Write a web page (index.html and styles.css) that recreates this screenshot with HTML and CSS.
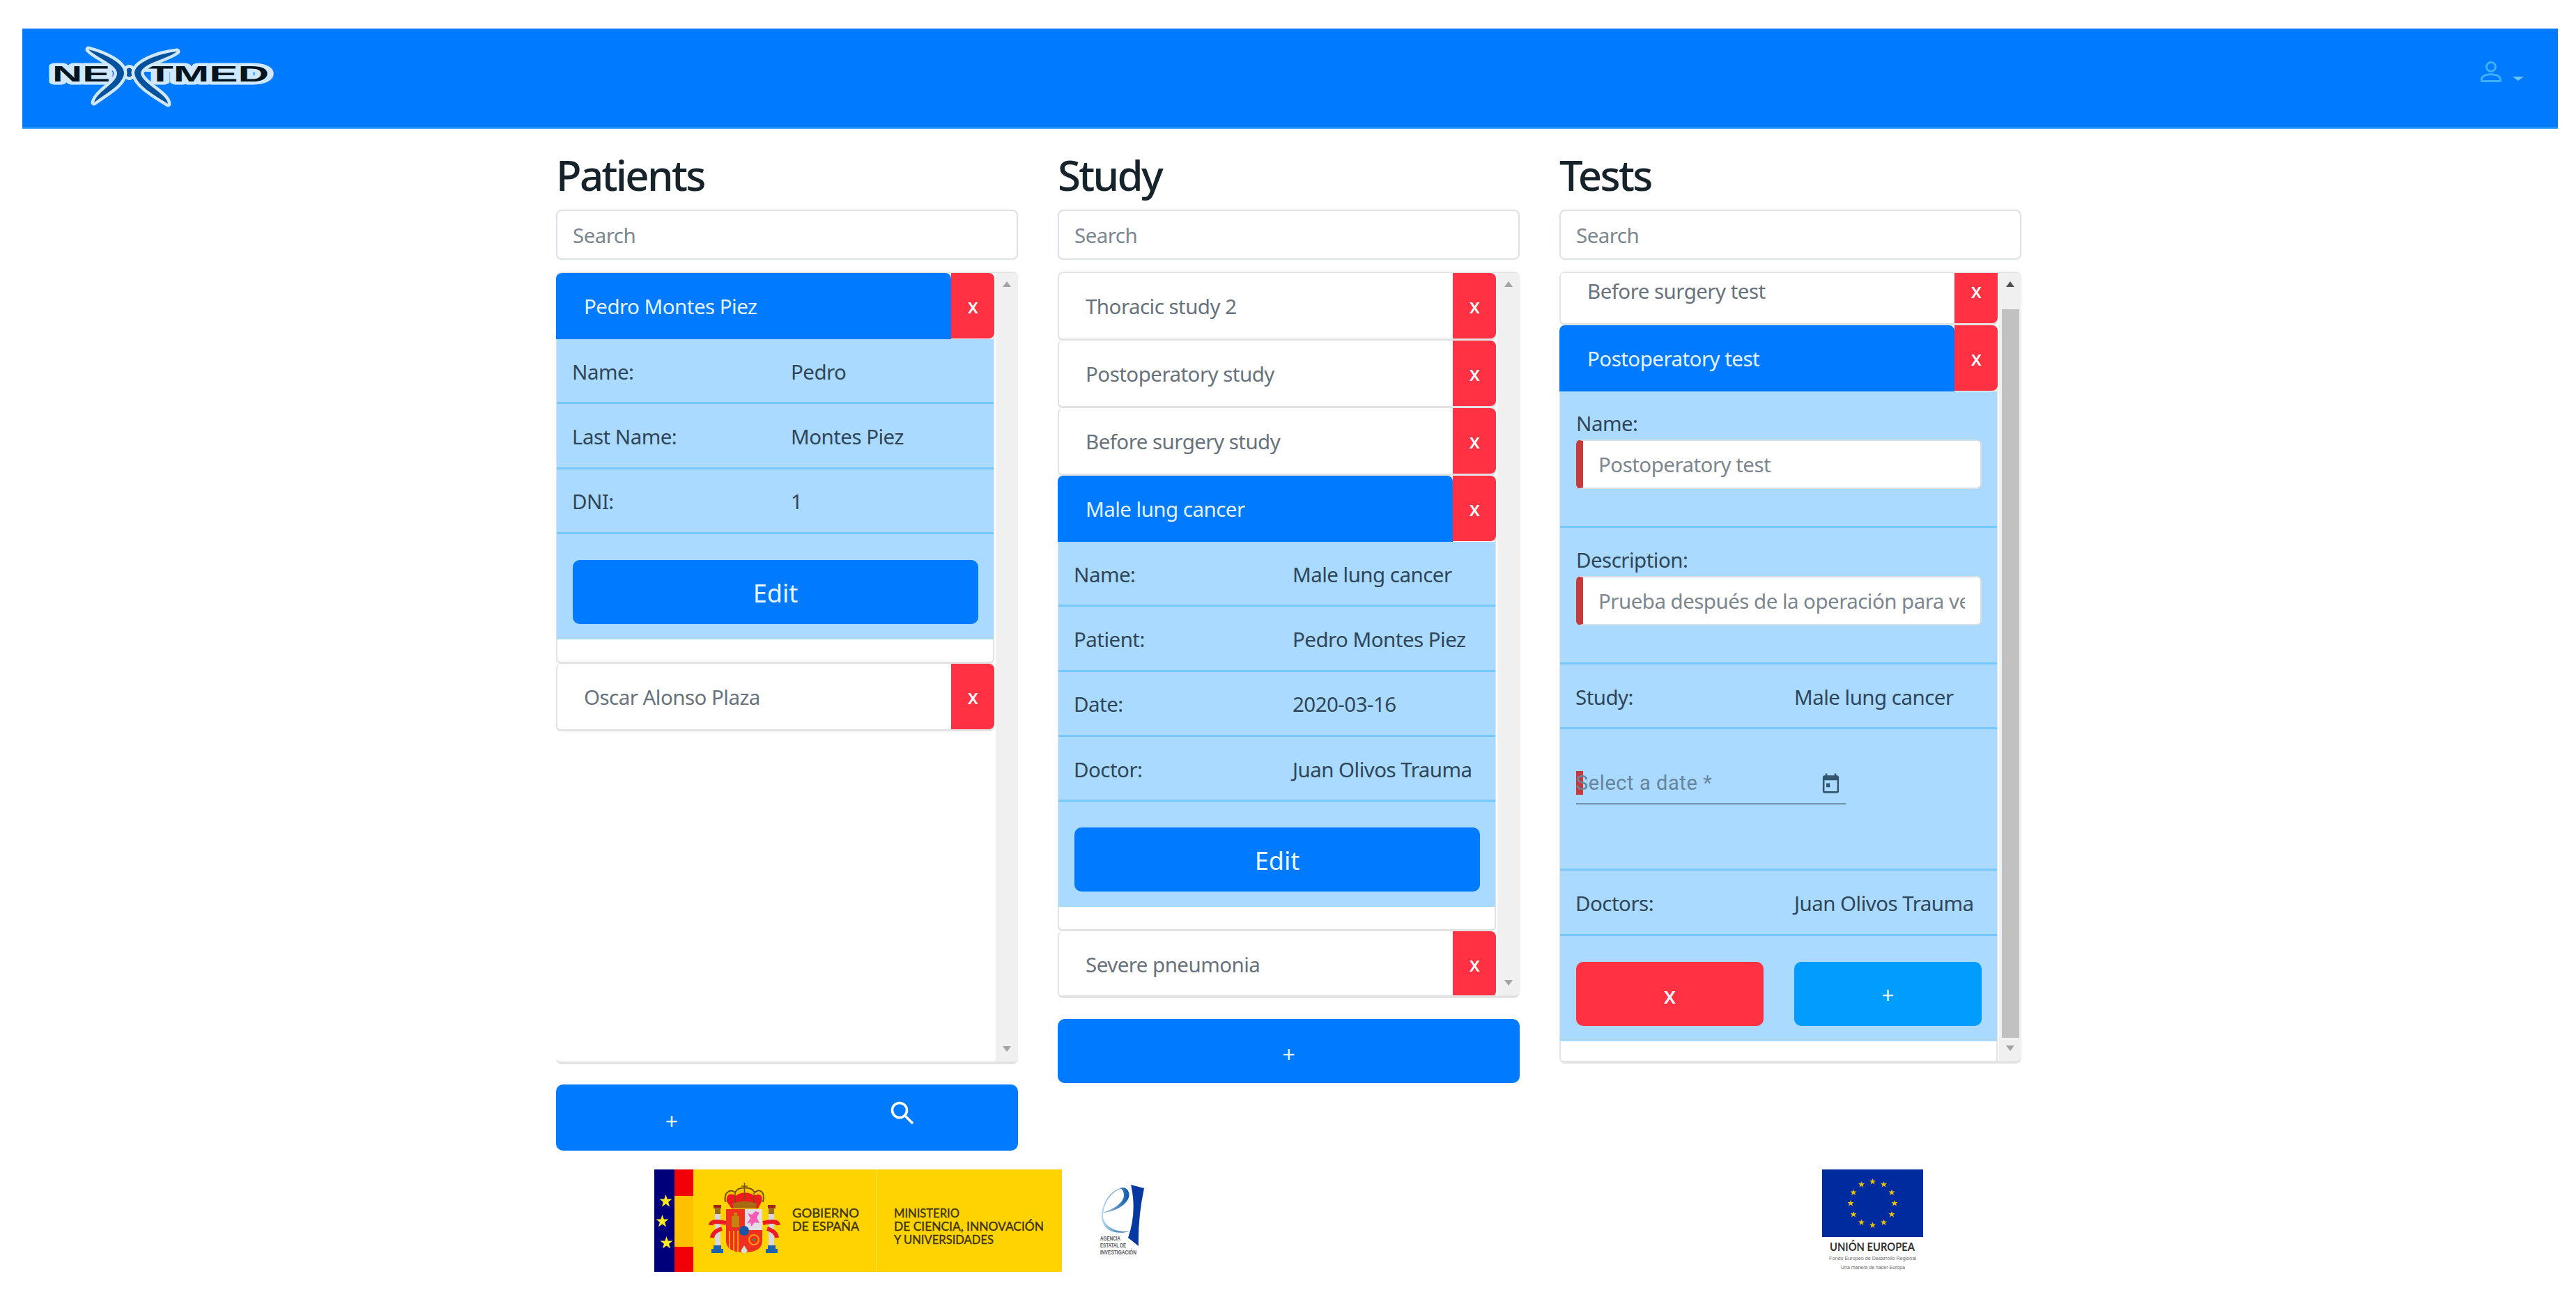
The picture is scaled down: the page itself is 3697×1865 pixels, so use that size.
FILE: index.html
```html
<!DOCTYPE html>
<html lang="en">
<head>
    <meta charset="UTF-8">
    <meta name="viewport" content="width=device-width, initial-scale=1.0">
    <title>Nextmed</title>
    <link rel="stylesheet" href="styles.css">
</head>
<body>
    <!-- Navbar -->
    <nav class="navbar">
        <svg class="brand" width="330" height="100" viewBox="65 60 330 100">
            <g class="brand-text">
                <text x="75" y="117" textLength="83" lengthAdjust="spacingAndGlyphs">NE</text>
                <text x="211" y="117" textLength="175" lengthAdjust="spacingAndGlyphs">TMED</text>
            </g>
            <g class="brand-mark">
                <ellipse cx="185.500" cy="104" rx="5" ry="6.500"/>
                <path d="M127 71 C150 77 178 90 178 105 C177 121 154 133 135 147 C140 130 168 120 168 105 C167 92 140 84 127 71 Z"/>
                <path d="M254 74 C226 77 193 90 193 105 C195 122 222 137 241 149 C240 134 203 120 202 105 C205 90 238 86 254 74 Z"/>
            </g>
        </svg>
        <div class="user-menu">
            <svg width="34" height="34" viewBox="0 0 34 34">
                <circle cx="17" cy="10" r="6.500"/>
                <path d="M3.500 30.500 V27 C6 18.500 28 18.500 30.500 27 V30.500 Z"/>
            </svg>
            <span class="caret"></span>
        </div>
    </nav>

    <div class="container">
        <!-- Patients -->
        <section class="column">
            <h2>Patients</h2>
            <input class="search" type="text" placeholder="Search">
            <div class="panel panel-patients">
                <div class="list">
                    <div class="card">
                        <div class="card-header active"><span>Pedro Montes Piez</span><button class="remove">x</button></div>
                        <div class="details">
                            <div class="row"><span>Name:</span><span>Pedro</span></div>
                            <div class="row"><span>Last Name:</span><span>Montes Piez</span></div>
                            <div class="row"><span>DNI:</span><span>1</span></div>
                            <div class="actions"><button class="btn">Edit</button></div>
                        </div>
                    </div>
                    <div class="card">
                        <div class="card-header"><span>Oscar Alonso Plaza</span><button class="remove">x</button></div>
                    </div>
                </div>
                <div class="scrollbar"><i class="up"></i><i class="down"></i></div>
            </div>
            <div class="add-bar add-patient">
                <span>+</span>
                <svg width="34" height="34" viewBox="0 0 34 34">
                    <circle cx="13" cy="13" r="10.500"/>
                    <path d="M20.500 20.500 L32 32"/>
                </svg>
            </div>
        </section>

        <!-- Study -->
        <section class="column">
            <h2>Study</h2>
            <input class="search" type="text" placeholder="Search">
            <div class="panel panel-study">
                <div class="list">
                    <div class="card">
                        <div class="card-header"><span>Thoracic study 2</span><button class="remove">x</button></div>
                    </div>
                    <div class="card">
                        <div class="card-header"><span>Postoperatory study</span><button class="remove">x</button></div>
                    </div>
                    <div class="card">
                        <div class="card-header"><span>Before surgery study</span><button class="remove">x</button></div>
                    </div>
                    <div class="card">
                        <div class="card-header active"><span>Male lung cancer</span><button class="remove">x</button></div>
                        <div class="details">
                            <div class="row"><span>Name:</span><span>Male lung cancer</span></div>
                            <div class="row"><span>Patient:</span><span>Pedro Montes Piez</span></div>
                            <div class="row"><span>Date:</span><span>2020-03-16</span></div>
                            <div class="row"><span>Doctor:</span><span>Juan Olivos Trauma</span></div>
                            <div class="actions"><button class="btn">Edit</button></div>
                        </div>
                    </div>
                    <div class="card">
                        <div class="card-header"><span>Severe pneumonia</span><button class="remove">x</button></div>
                    </div>
                </div>
                <div class="scrollbar"><i class="up"></i><i class="down"></i></div>
            </div>
            <div class="add-bar add-study"><span>+</span></div>
        </section>

        <!-- Tests -->
        <section class="column">
            <h2>Tests</h2>
            <input class="search" type="text" placeholder="Search">
            <div class="panel panel-tests">
                <div class="list scrolled">
                    <div class="card">
                        <div class="card-header"><span>Before surgery test</span><button class="remove">x</button></div>
                    </div>
                    <div class="card">
                        <div class="card-header active"><span>Postoperatory test</span><button class="remove">x</button></div>
                        <div class="details">
                            <div class="field">
                                <label>Name:</label>
                                <input type="text" placeholder="Postoperatory test">
                            </div>
                            <div class="field">
                                <label>Description:</label>
                                <input type="text" placeholder="Prueba después de la operación para ver">
                            </div>
                            <div class="row"><span>Study:</span><span>Male lung cancer</span></div>
                            <div class="date-row">
                                <div class="date-field">
                                    <span class="date-label">Select a date *</span>
                                    <svg width="31" height="34" viewBox="0 0 24 24" preserveAspectRatio="none">
                                        <path d="M19 3h-1V1h-2v2H8V1H6v2H5c-1.110 0-1.990.900-1.990 2L3 19c0 1.100.890 2 2 2h14c1.100 0 2-.900 2-2V5c0-1.100-.900-2-2-2zm0 16H5V8h14v11zM7 11h4v4H7z"/>
                                    </svg>
                                </div>
                            </div>
                            <div class="row"><span>Doctors:</span><span>Juan Olivos Trauma</span></div>
                            <div class="actions two">
                                <button class="btn btn-danger">x</button>
                                <button class="btn btn-info">+</button>
                            </div>
                        </div>
                    </div>
                </div>
                <div class="scrollbar enabled"><i class="up"></i><b class="thumb"></b><i class="down"></i></div>
            </div>
        </section>
    </div>

    <!-- Institutional logos -->
    <footer class="logos">
        <svg class="logo-gob" width="585" height="147" viewBox="0 0 585 147">
            <rect width="585" height="147" fill="#ffd300"/>
            <rect width="29" height="147" fill="#00007a"/>
            <rect x="29" width="27" height="147" fill="#f20008"/>
            <rect x="29" y="38" width="27" height="73" fill="#ffc000"/>
            <path d="M319 0V147" stroke="#ffdb2e" stroke-width="2"/>
            <g fill="#ffec1e">
                <path id="star" d="M16.500 36l2.200 6.500h6.800l-5.400 4.200 2 6.800-5.600-4-5.600 4 2-6.800-5.400-4.200h6.800z"/>
                <use href="#star" x="-5" y="29"/>
                <use href="#star" x="1" y="60"/>
            </g>
            <!-- Coat of arms -->
            <path d="M102 47C99 30 112 28 116 33C120 24 140 24 144 33C150 27 160 31 156 47" fill="#f5c400" stroke="#76520b" stroke-width="2"/>
            <path d="M104 46C102 34 113 34 117 38C122 32 139 32 143 38C149 34 157 36 154 46L149 56H111Z" fill="#ef1a1e"/>
            <path d="M116 50V34M143 50V34M129.500 19V50M125 24H134" stroke="#76520b" stroke-width="1.500"/>
            <path d="M112 49Q130 42 147 49L146 56H114Z" fill="#a86a12"/>
            <g id="pillar">
                <rect x="87" y="57" width="8" height="56" fill="#d8d8dc"/>
                <rect x="85" y="51" width="11" height="5" fill="#a5260c"/>
                <rect x="87" y="55" width="8" height="9" fill="#9b6b14"/>
                <path d="M82 120V114H85V109H96V114H99V120Z" fill="#1e63ad"/>
                <path d="M103 77Q82 72 81 80M97 85Q84 89 83 98" fill="none" stroke="#ea1b22" stroke-width="6"/>
            </g>
            <use href="#pillar" transform="translate(259 0) scale(-1 1)"/>
            <path d="M103 57H155V102C155 114 145 119 129 119C113 119 103 114 103 102Z" fill="#f0301e"/>
            <path d="M130 57H155V87H130Z" fill="#e3dce5"/>
            <path d="M134 63l6 2 5-5 6 2-4 7 4 8-7-1-5 6-1-6-5 2 5-8z" fill="#f45bb6"/>
            <path d="M111 83V67H114V62H119V67H122V83Z" fill="#c58210"/>
            <path d="M108 88V114M114 88V117M120 88V118" stroke="#f7a100" stroke-width="2"/>
            <circle cx="143" cy="101" r="7" fill="none" stroke="#ff9b10" stroke-width="2"/>
            <circle cx="143" cy="101" r="2" fill="#3b9b3b"/>
            <circle cx="129" cy="88" r="7" fill="#1656a5"/>
            <path d="M124 117L129 109L134 117L129 121Z" fill="#d8dfd6"/>
            <g class="gob-text">
                <text x="198" y="69" textLength="96" lengthAdjust="spacingAndGlyphs">GOBIERNO</text>
                <text x="198" y="88" textLength="96" lengthAdjust="spacingAndGlyphs">DE ESPAÑA</text>
                <text x="344" y="69" textLength="94" lengthAdjust="spacingAndGlyphs">MINISTERIO</text>
                <text x="344" y="88" textLength="215" lengthAdjust="spacingAndGlyphs">DE CIENCIA, INNOVACIÓN</text>
                <text x="344" y="107" textLength="143" lengthAdjust="spacingAndGlyphs">Y UNIVERSIDADES</text>
            </g>
        </svg>
        <svg class="logo-aei" width="70" height="125" viewBox="36 19 70 125">
            <defs>
                <linearGradient id="aei" x1="0" x2="1"><stop offset="0" stop-color="#b9d9ef"/><stop offset="1" stop-color="#0b5aa9"/></linearGradient>
            </defs>
            <path d="M83 41L102 46Q93 88 94 129L79 117Q92 80 83 41Z" fill="#0638a2"/>
            <path d="M37 82C55 79 74 67 73 55C72 47 69 46 66 47C74 41 83 50 80 59C74 75 52 81 37 82Z" fill="url(#aei)"/>
            <path d="M70 46C52 52 43 70 43 87C45 101 62 110 82 108C62 113 44 108 41 90C40 68 54 48 70 46Z" fill="url(#aei)"/>
            <g class="aei-text">
                <text x="39" y="121" textLength="29" lengthAdjust="spacingAndGlyphs">AGENCIA</text>
                <text x="39" y="131" textLength="37" lengthAdjust="spacingAndGlyphs">ESTATAL DE</text>
                <text x="39" y="141" textLength="52" lengthAdjust="spacingAndGlyphs">INVESTIGACIÓN</text>
            </g>
        </svg>
        <svg class="logo-eu" width="145" height="147" viewBox="35 19 145 147">
            <rect x="35" y="19" width="145" height="97" fill="#002b9f"/>
            <g fill="#e5bf0d">
                <path id="eu" d="M107.500 32l1.200 3h3.300l-2.500 2.200 1 3.300-3-2-3 2 1-3.300-2.500-2.200h3.300z"/>
                <use href="#eu" x="16" y="4"/>
                <use href="#eu" x="27.500" y="15.500"/>
                <use href="#eu" x="31.500" y="31"/>
                <use href="#eu" x="27.500" y="47"/>
                <use href="#eu" x="16" y="58.500"/>
                <use href="#eu" y="62.500"/>
                <use href="#eu" x="-16" y="58.500"/>
                <use href="#eu" x="-27.500" y="47"/>
                <use href="#eu" x="-31.500" y="31"/>
                <use href="#eu" x="-27.500" y="15.500"/>
                <use href="#eu" x="-16" y="4"/>
            </g>
            <g class="eu-text">
                <text class="eu-title" x="46" y="136" textLength="122" lengthAdjust="spacingAndGlyphs">UNIÓN EUROPEA</text>
                <text x="45" y="149" textLength="125" lengthAdjust="spacingAndGlyphs">Fondo Europeo de Desarrollo Regional</text>
                <text x="62" y="162" textLength="92" lengthAdjust="spacingAndGlyphs">Una manera de hacer Europa</text>
            </g>
        </svg>
    </footer>
</body>
</html>
```
FILE: styles.css
```css
* {
    box-sizing: border-box;
}
body {
    margin: 0;
    background: #fff;
    font-family: 'Noto Sans', sans-serif;
    font-size: 29.5px;
    letter-spacing: -0.018em;
    color: #2f4659;
    overflow: hidden;
}
input,
button {
    font: inherit;
    letter-spacing: inherit;
}

/* Navbar */
.navbar {
    display: flex;
    align-items: flex-start;
    justify-content: space-between;
    height: 144px;
    margin: 41px 26px 0 32px;
    padding: 19px 49px 0 33px;
    background: #007bff;
    border-bottom: 2px solid #35a5ff;
}
.brand-text {
    font-family: 'Liberation Sans', sans-serif;
    font-size: 31px;
    font-weight: bold;
    letter-spacing: 0;
    fill: #02151f;
    stroke: #cfe8ff;
    stroke-width: 9px;
    stroke-linejoin: round;
    paint-order: stroke;
}
.brand-mark {
    fill: #00529f;
    stroke: #cfe8ff;
    stroke-width: 9px;
    stroke-linejoin: round;
    paint-order: stroke;
}
.user-menu {
    display: flex;
    align-items: center;
    gap: 14px;
    padding-top: 26px;
}
.user-menu svg {
    fill: none;
    stroke: #3fb0ff;
    stroke-width: 3px;
}
.caret {
    margin-top: 20px;
    border: 8px solid transparent;
    border-top: 6px solid #6cc2ff;
    border-bottom: 0;
}

/* Columns */
.container {
    display: grid;
    grid-template-columns: repeat(3, 663px);
    gap: 57px;
    align-items: start;
    height: 1494px;
    padding: 16px 0 0 798px;
}
.column {
    display: flex;
    flex-direction: column;
}
h2 {
    margin: 0;
    padding-top: 1px;
    font-size: 60px;
    font-weight: 500;
    line-height: 99px;
    letter-spacing: -0.045em;
    color: #17232b;
}
.search {
    height: 72px;
    margin-bottom: 17px;
    padding: 0 22px;
    border: 2px solid #dce1e7;
    border-radius: 8px;
    background: #fff;
}
input::placeholder {
    color: #7c868f;
    opacity: 1;
}

/* Scrollable lists */
.panel {
    display: flex;
    border: 0 solid #e3e3e3;
    border-width: 2px 0 4px;
    border-radius: 8px;
    overflow: hidden;
}
.panel-patients {
    height: 1138px;
}
.panel-study {
    height: 1043px;
}
.panel-tests {
    height: 1137px;
}
.list {
    flex: 1;
}
.list.scrolled {
    margin-top: -22px;
}
.scrollbar {
    display: flex;
    flex-direction: column;
    justify-content: space-between;
    align-items: center;
    width: 32px;
    margin-left: 2px;
    padding: 12px 0 14px;
    background: #f0f0f0;
}
.scrollbar i {
    border: 6px solid transparent;
}
.scrollbar .up {
    border-top: 0;
    border-bottom: 8px solid #a3a3a3;
}
.scrollbar .down {
    border-bottom: 0;
    border-top: 8px solid #a3a3a3;
}
.scrollbar.enabled .up {
    border-bottom-color: #505050;
}
.thumb {
    flex: 1;
    width: 25px;
    margin: 32px 0 11px;
    background: #c1c1c1;
}

/* Cards */
.card {
    border: 2px solid #e2e2e2;
    border-width: 0 2px 3px;
    border-radius: 7px;
    background: #fff;
}
.card-header {
    display: flex;
    height: 94px;
    margin: 0 -2px;
    color: #67727c;
}
.card-header span {
    flex: 1;
    padding-left: 40px;
    line-height: 96px;
    white-space: nowrap;
}
.card-header.active {
    height: 95px;
    color: #e4f3ff;
}
.card-header.active span {
    background: #007bff;
    border-radius: 8px 8px 0 0;
}
.remove {
    width: 62px;
    height: 94px;
    padding: 0;
    border: 0;
    border-radius: 0 8px 8px 0;
    background: #ff3143;
    color: #fff;
    font-weight: 500;
    font-size: 28px;
}
.details {
    margin: 0 -1px 32px;
    background: #aadaff;
}
.row {
    display: grid;
    grid-template-columns: 314px 1fr;
    align-items: center;
    height: 93.3px;
    padding: 2px 0 0 22px;
    border-bottom: 3px solid #78c6ff;
    white-space: nowrap;
}
.actions {
    display: flex;
    gap: 44px;
    height: 151px;
    padding: 37px 22px 0 23px;
}
.btn {
    flex: 1;
    height: 92px;
    padding: 3px 0 0;
    border: 0;
    border-radius: 10px;
    background: #007bff;
    color: #e8f5ff;
    font-size: 36px;
    letter-spacing: 0;
}
.btn-danger {
    background: #ff3143;
    font-weight: 500;
    font-size: 32px;
}
.btn-info {
    background: #009dff;
    font-size: 32px;
}

/* Test form */
.field {
    display: flex;
    flex-direction: column;
    height: 196px;
    padding: 23px 22px 0 23px;
    border-bottom: 3px solid #78c6ff;
}
.field label {
    line-height: 46px;
}
.field input {
    height: 71px;
    padding: 0 22px;
    border: 2px solid #d5dfe8;
    border-left: 10px solid #c33b3c;
    border-radius: 7px;
    background: #fff;
}
.date-row {
    height: 203px;
    padding: 60px 23px 0;
    border-bottom: 3px solid #78c6ff;
}
.date-field {
    display: flex;
    align-items: flex-start;
    justify-content: space-between;
    width: 387px;
    height: 48px;
    padding-right: 6px;
    border-bottom: 2px solid #7091aa;
    font-family: Roboto, sans-serif;
    font-size: 29px;
    letter-spacing: 0.02em;
    color: #66859c;
}
.date-label {
    line-height: 34px;
    background: linear-gradient(#c33b3c, #c33b3c) no-repeat 0 0 / 10px 34px;
}
.date-field svg {
    margin-top: 2px;
    fill: #34566e;
}

/* Bottom bars */
.add-bar {
    display: grid;
    place-items: center;
    margin-top: 29px;
    border-radius: 10px;
    background: #007bff;
    color: #e8f5ff;
    font-size: 32px;
}
.add-patient {
    grid-template-columns: 1fr 1fr;
    height: 95px;
}
.add-patient span {
    padding-top: 10px;
}
.add-patient svg {
    margin: -14px 0 0 -1px;
    fill: none;
    stroke: #fff;
    stroke-width: 3.6px;
}
.add-study {
    height: 92px;
    margin-top: 30px;
    padding-top: 9px;
}

/* Logos */
.logos {
    display: flex;
    align-items: flex-start;
    padding-left: 939px;
}
.logo-aei {
    margin-left: 52px;
}
.logo-eu {
    margin-left: 969px;
}
.logos text {
    letter-spacing: 0;
}
.gob-text {
    font-family: Lato, sans-serif;
    font-size: 18px;
    fill: #3c3408;
    stroke: #3c3408;
    stroke-width: 0.4px;
}
.aei-text {
    font-family: 'Liberation Sans', sans-serif;
    font-size: 8.5px;
    font-weight: bold;
    fill: #55565a;
}
.eu-text {
    font-family: 'Liberation Sans', sans-serif;
    font-size: 7.5px;
    fill: #6d6d6d;
}
.eu-title {
    font-family: Lato, sans-serif;
    font-size: 17px;
    font-weight: bold;
    fill: #333;
}
```
